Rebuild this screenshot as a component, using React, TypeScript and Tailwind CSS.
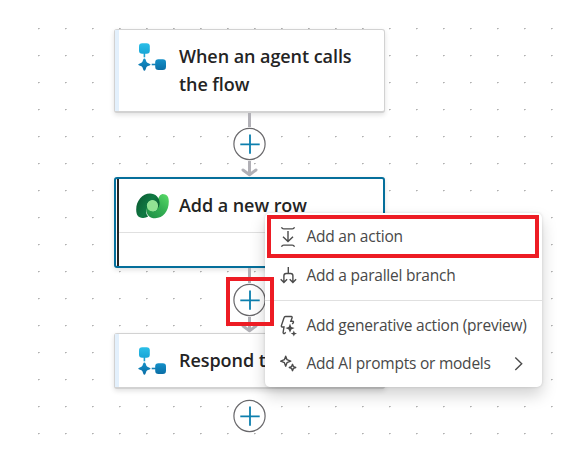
import type { ReactNode } from "react";

const FONT = "font-['Open_Sans','Noto_Sans',sans-serif]";

function DotGrid() {
  const dots: ReactNode[] = [];
  for (let r = 0; r < 16; r++) {
    for (let c = 0; c < 20; c++) {
      dots.push(
        <g key={`${r}-${c}`}>
          <rect x={38 + c * 27} y={28 + r * 27} width="1" height="1" fill="#b0b0b0" />
          <rect x={39 + c * 27} y={28 + r * 27} width="1" height="1" fill="#c6c6c6" />
          <rect x={38 + c * 27} y={29 + r * 27} width="1" height="1" fill="#e9e9e9" />
        </g>
      );
    }
  }
  return (
    <svg className="absolute inset-0" width="569" height="451" shapeRendering="crispEdges">
      {dots}
    </svg>
  );
}

function FlowIcon() {
  return (
    <svg width="30" height="30" viewBox="0 0 30 30" className="shrink-0">
      <defs>
        <linearGradient id="cyan" x1="0" y1="0" x2="0" y2="1">
          <stop offset="0" stopColor="#2bbfe8" />
          <stop offset="1" stopColor="#18a5d6" />
        </linearGradient>
        <linearGradient id="blue" x1="0" y1="0" x2="0" y2="1">
          <stop offset="0" stopColor="#1490c8" />
          <stop offset="1" stopColor="#0a6ea6" />
        </linearGradient>
      </defs>
      <rect x="5.6" y="10" width="1.6" height="4.3" fill="#1fa3d0" />
      <rect x="13.7" y="20.7" width="4.5" height="1.6" fill="#1583b8" />
      <rect x="1" y="0.2" width="10.8" height="10.6" rx="3.2" fill="url(#cyan)" />
      <path d="M6.4 15.4 Q7.2 15.4 7.6 16.6 L8.4 18.8 Q8.7 19.5 9.4 19.8 L11.5 20.7 Q12.6 21.1 12.6 21.6 Q12.6 22.1 11.5 22.5 L9.4 23.3 Q8.7 23.6 8.4 24.3 L7.6 26.5 Q7.1 27.7 6.4 27.7 Q5.7 27.7 5.2 26.5 L4.4 24.3 Q4.1 23.6 3.4 23.3 L1.3 22.5 Q.2 22.1 .2 21.6 Q.2 21.1 1.3 20.7 L3.4 19.8 Q4.1 19.5 4.4 18.8 L5.2 16.6 Q5.7 15.4 6.4 15.4Z" fill="url(#blue)" />
      <rect x="17.2" y="16.2" width="10.8" height="10.8" rx="3.2" fill="url(#blue)" />
    </svg>
  );
}

function DataverseIcon() {
  return (
    <svg width="34" height="26" viewBox="0 0 34 26" className="shrink-0">
      <defs>
        <linearGradient id="dark" x1="0" y1="0" x2="1" y2="0.6">
          <stop offset="0" stopColor="#0a5530" />
          <stop offset="0.6" stopColor="#107a43" />
          <stop offset="1" stopColor="#0b5c31" />
        </linearGradient>
        <linearGradient id="bright" x1="1" y1="0" x2="0.2" y2="1">
          <stop offset="0" stopColor="#5bdd68" />
          <stop offset="0.5" stopColor="#36b254" />
          <stop offset="1" stopColor="#209247" />
        </linearGradient>
      </defs>
      <path d="M26.5 .9 C30.5 1.2 32.8 2.8 32.8 8.6 C32.8 18.4 27 25.2 19.2 25.2 C13.8 25.2 10.3 21.6 10.3 16.9 C10.3 14.2 11.3 12 13 10.5 C12.4 15.5 14.5 18.2 17 18.2 C21.2 18.2 21.6 14.5 21.5 9.8 C21.5 6 23.4 1.5 26.5 .9Z" fill="url(#bright)" />
      <path d="M6.7 24.9 C2.3 24.6 .2 22.3 .2 16.4 C.2 7.8 6.3 .4 14 .4 C19.5 .4 23.6 4.6 23.6 10 C23.6 12.6 22.6 14.6 21.3 15.7 C22 10.8 19.7 7.5 16.5 7.5 C12.4 7.5 10.9 11.2 11.2 14.5 C9.6 18.2 9.9 21.6 12.2 23.6 C10.5 24.6 8.6 25 6.7 24.9Z" fill="url(#dark)" />
      <circle cx="16.5" cy="12.7" r="5.6" fill="#92e293" />
    </svg>
  );
}

function PlusButton() {
  return (
    <svg width="33" height="34" viewBox="0 0 33 34" className="relative shrink-0">
      <circle cx="16.5" cy="17" r="15.6" fill="#fff" stroke="#69686b" strokeWidth="1.2" />
      <path d="M7.3 17.3H26.7M17 7.5V26.8" stroke="#0c7fae" strokeWidth="1.8" />
    </svg>
  );
}

function Arrow() {
  return (
    <svg width="17" height="16" viewBox="0 0 17 16" className="shrink-0">
      <path d="M8.5 0V13" stroke="#b1b0b6" strokeWidth="3" />
      <path d="M2 9L8.5 13.7L15 9" fill="none" stroke="#b1b0b6" strokeWidth="3" strokeLinecap="round" strokeLinejoin="round" />
    </svg>
  );
}

function Title({ children }: { children: ReactNode }) {
  return <div className="whitespace-nowrap text-[18px] font-semibold leading-7 tracking-[-0.06px] text-[#242424]">{children}</div>;
}

const stroke = { fill: "none", stroke: "#4b4b4b", strokeWidth: 1.4 };

function ActionIcon() {
  return (
    <svg width="18" height="22" viewBox="0 0 18 22" {...stroke}>
      <path d="M1.5 1.2C2 2.5 2.7 2.9 3.7 2.9H12.3C13.3 2.9 14 2.5 14.5 1.2M1.5 20.8C2 19.5 2.7 19.1 3.7 19.1H12.3C13.3 19.1 14 19.5 14.5 20.8M8 5V15.4M3 10.7L8 15.6L13 10.7" />
    </svg>
  );
}

function BranchIcon() {
  return (
    <svg width="18" height="20" viewBox="0 0 18 20" {...stroke}>
      <path d="M8.3 1V7.5M3.9 16.3V9.7Q3.9 7.5 6.1 7.5H10.7Q12.9 7.5 12.9 9.7V16.3M.7 13.3L3.9 16.5L7.1 13.3M9.7 13.3L12.9 16.5L16.1 13.3" />
    </svg>
  );
}

function GenerativeIcon() {
  return (
    <svg width="18" height="22" viewBox="0 0 18 22" {...stroke}>
      <path d="M5.7 17.3L4.8 18.3Q3.3 19.2 3.1 17.5L4 12H2.3Q1.1 11.8 1.4 10.6L4.1 2.5Q4.4 1.5 5.5 1.5H11.2Q12.4 1.6 12.1 2.8L10.8 6.3H12.6Q14 6.6 13.2 7.8L12.3 9.1" />
      <path d="M10 8.5L11.3 11.9L14.6 13.1L11.3 14.4L10 17.8L8.7 14.4L5.4 13.1L8.7 11.9Z" fill="#4b4b4b" stroke="none" />
      <path d="M13.8 15.5L14.7 17.8L17 18.6L14.7 19.4L13.8 21.6L13 19.4L10.7 18.6L13 17.8Z" fill="#4b4b4b" stroke="none" />
    </svg>
  );
}

function SparkleIcon() {
  return (
    <svg width="18" height="20" viewBox="0 0 18 20" {...stroke} strokeLinejoin="round">
      <path d="M5.7 2.2L7 5.7L10.7 7.2L7 8.7L5.7 12.2L4.4 8.7L.7 7.2L4.4 5.7Z" />
      <path d="M12.5 10.3L13.4 12.6L15.7 13.5L13.4 14.4L12.5 16.7L11.6 14.4L9.3 13.5L11.6 12.6Z" />
    </svg>
  );
}

function MenuRow({ icon, label, more, className }: { icon: ReactNode; label: ReactNode; more?: boolean; className: string }) {
  return (
    <div className={`flex items-center ${className}`}>
      <div className="flex w-[26.5px] shrink-0 items-center">{icon}</div>
      <div className="flex-1 whitespace-nowrap text-[#484848]">{label}</div>
      {more && (
        <svg width="10" height="14" viewBox="0 0 10 14" className="mr-[18px]" {...stroke}>
          <path d="M1.3 .6L7.7 6.8L1.3 13" />
        </svg>
      )}
    </div>
  );
}

export default function App() {
  return (
    <main className={`relative h-[451px] w-[569px] overflow-hidden bg-white ${FONT}`}>
      <DotGrid />
      <div className="relative ml-[114px] flex w-[271px] flex-col items-center pt-[29px]">
        <section className="flex h-[84px] w-full rounded-[3px] border border-b-2 border-[#d2d2d2] bg-white shadow-[0_2px_5px_rgba(0,0,0,0.12)]">
          <div className="w-1 shrink-0 bg-[#e3f0fc]" />
          <div className="flex pl-[19px] pt-[13px]">
            <FlowIcon />
            <div className="-mt-px ml-[11px]">
              <Title>When an agent calls</Title>
              <Title>the flow</Title>
            </div>
          </div>
        </section>
        <div className="flex h-[64px] flex-col items-center">
          <div className="h-[14px] w-[3px] shrink-0 bg-[#b1b0b6]" />
          <PlusButton />
          <Arrow />
        </div>
        <section className="flex h-[91px] w-full rounded-[3px] border-2 border-[#056f9b] bg-white shadow-[0_2px_5px_rgba(0,0,0,0.12)]">
          <div className="ml-px w-[2px] shrink-0 bg-[#242424]" />
          <div className="flex-1">
            <div className="flex h-[54px] items-center border-b border-[#e0e0e0] pl-[17px]">
              <DataverseIcon />
              <div className="-mt-[2px] ml-[9px]">
                <Title>Add a new row</Title>
              </div>
            </div>
          </div>
        </section>
        <div className="flex h-[65px] flex-col items-center">
          <div className="h-[15px] w-[3px] shrink-0 bg-[#b1b0b6]" />
          <PlusButton />
          <Arrow />
        </div>
        <section className="flex h-[56px] w-full rounded-[3px] border border-b-2 border-[#d2d2d2] bg-white shadow-[0_2px_5px_rgba(0,0,0,0.12)]">
          <div className="w-1 shrink-0 bg-[#e3f0fc]" />
          <div className="flex pl-[19px] pt-[13px]">
            <FlowIcon />
            <div className="-mt-px ml-[11px]">
              <Title>Respond t</Title>
            </div>
          </div>
        </section>
        <div className="pt-[10px]">
          <PlusButton />
        </div>
      </div>

      <div className="absolute left-[265px] top-[213px] h-[174px] w-[277px] rounded-[5px] bg-white text-[15.5px] tracking-[-0.23px] shadow-[0_8px_16px_rgba(0,0,0,0.18),0_0_3px_rgba(0,0,0,0.14)]">
        <div className="pl-[2px] pt-[2px]">
          <MenuRow className="h-[43px] w-[272px] border-4 border-[#ed1c24] pl-[9px]" icon={<ActionIcon />} label="Add an action" />
        </div>
        <MenuRow className="h-[36px] pl-[15px]" icon={<BranchIcon />} label="Add a parallel branch" />
        <div className="mt-[6px] border-t border-[#e0e0e0]" />
        <MenuRow className="mt-[6px] h-[38px] pl-[15px]" icon={<GenerativeIcon />} label="Add generative action (preview)" />
        <MenuRow className="h-[38px] pl-[15px]" icon={<SparkleIcon />} label="Add AI prompts or models" more />
      </div>
      <div className="absolute left-[226px] top-[277px] h-[49px] w-[48px] border-4 border-[#ed1c24]" />
    </main>
  );
}
